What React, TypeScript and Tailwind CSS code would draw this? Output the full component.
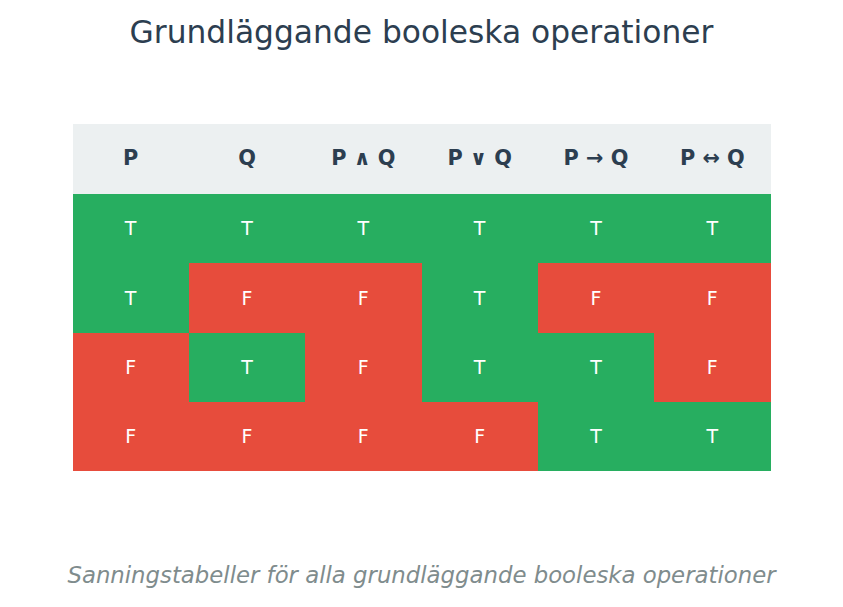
const headers = ["P", "Q", "P ∧ Q", "P ∨ Q", "P → Q", "P ↔ Q"];

const rows: boolean[][] = [
  [true, true, true, true, true, true],
  [true, false, false, true, false, false],
  [false, true, false, true, true, false],
  [false, false, false, false, true, true],
];

function App() {
  return (
    <div className="w-[843px] h-[607px] bg-white flex flex-col items-center font-['DejaVu_Sans',sans-serif]">
      <h1 className="mt-[13px] h-[38px] leading-[38px] text-[31.3px] text-[#2c3e50]">
        Grundläggande booleska operationer
      </h1>
      <div className="mt-[73px] w-[698px] h-[347px] grid grid-cols-6 grid-rows-[70px_repeat(4,1fr)]">
        {headers.map((h) => (
          <div
            key={h}
            className="bg-[#ecf0f1] flex items-center justify-center text-[20.8px] font-bold text-[#2c3e50]"
          >
            {h}
          </div>
        ))}
        {rows.map((row, r) =>
          row.map((v, c) => (
            <div
              key={r + "-" + c}
              className={
                "flex items-center justify-center text-[19px] text-white " +
                (v ? "bg-[#27ae60]" : "bg-[#e74c3c]")
              }
            >
              {v ? "T" : "F"}
            </div>
          ))
        )}
      </div>
      <p className="mt-[89px] h-[30px] leading-[30px] text-[22.8px] italic text-[#7f8c8d]">
        Sanningstabeller för alla grundläggande booleska operationer
      </p>
    </div>
  );
}

export default App;
